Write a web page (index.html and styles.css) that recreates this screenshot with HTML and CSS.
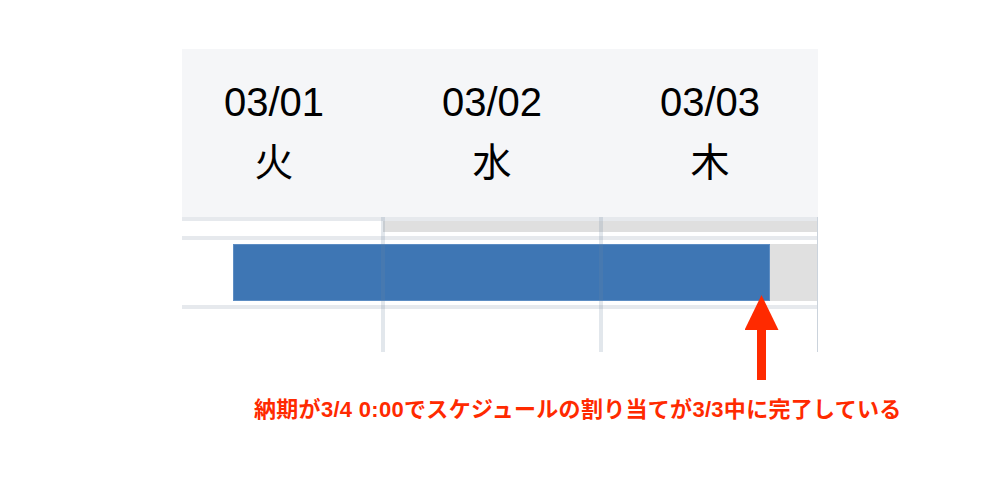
FILE: index.html
```html
<!DOCTYPE html>
<html lang="ja">
<head>
    <meta charset="UTF-8">
    <title>ガントチャート 納期</title>
    <link rel="stylesheet" href="styles.css">
</head>
<body>

    <div class="page">
        <div class="chart">
            <div class="head">
                <div class="day"><div class="date">03/01</div><div class="dow">火</div></div>
                <div class="day"><div class="date">03/02</div><div class="dow">水</div></div>
                <div class="day"><div class="date">03/03</div><div class="dow">木</div></div>
            </div>

            <div class="grid">
                <div class="hline"></div>
                <div class="row sub">
                    <div class="band"></div>
                </div>
                <div class="hline"></div>
                <div class="row task">
                    <div class="track"><div class="bar"></div></div>
                </div>
                <div class="hline"></div>

                <div class="cols">
                    <div class="col"></div>
                    <div class="col"></div>
                    <div class="col"></div>
                </div>
            </div>
        </div>

        <svg class="arrow" width="40" height="90" viewBox="0 0 40 90">
            <polygon points="16.5,0 33.5,35 -0.5,35" fill="#ff2a00"/>
            <rect x="12" y="34" width="9" height="51" fill="#ff2a00"/>
        </svg>

        <p class="note">納期が3/4 0:00でスケジュールの割り当てが3/3中に完了している</p>
    </div>

</body>
</html>
```

FILE: styles.css
```css
body {
    margin: 0;
    background: #fff;
    font-family: 'Liberation Sans', 'Noto Sans CJK JP', sans-serif;
}

.page {
    position: relative;
    width: 1000px;
    height: 478px;
}

.chart {
    width: 636px;
    margin-left: 182px;
    padding-top: 49px;
    overflow: hidden;
}

.head {
    display: grid;
    grid-template-columns: 218px 218px 218px;
    margin-left: -17px;
    height: 168px;
    background: #f5f6f8;
    width: 671px;
}

.day {
    text-align: center;
    color: #000;
    padding-top: 31px;
}

.date {
    font-size: 40px;
    line-height: 44px;
}

.dow {
    font-family: 'Noto Sans CJK JP', sans-serif;
    font-size: 39px;
    line-height: 70px;
}

.grid {
    position: relative;
    height: 135px;
    border-right: 1px solid #e3e7ec;
    box-sizing: border-box;
}

.hline {
    height: 4px;
    background: #e6e9ed;
}

.row.sub {
    height: 15px;
}

.band {
    margin-left: 201px;
    height: 11px;
    background: #dfdfdf;
}

.row.task {
    height: 65px;
    padding-top: 4px;
    box-sizing: border-box;
}

.track {
    margin-left: 51px;
    height: 57px;
    background: #e0e0e0;
}

.bar {
    width: 537px;
    height: 57px;
    box-sizing: border-box;
    background: #3e76b4;
    border: 1px solid #5d8dc3;
}

.cols {
    position: absolute;
    top: 0;
    bottom: 0;
    left: -17px;
    display: grid;
    grid-template-columns: 218px 218px 218px;
    pointer-events: none;
}

.col {
    border-right: 4px solid rgba(110, 135, 160, 0.2);
    margin-right: -2px;
}

.arrow {
    position: absolute;
    left: 745px;
    top: 295px;
}

.note {
    margin: 45px 0 0 254px;
    font-size: 22px;
    line-height: 26px;
    font-weight: bold;
    letter-spacing: 0.3px;
    color: #ff2a00;
}
```
